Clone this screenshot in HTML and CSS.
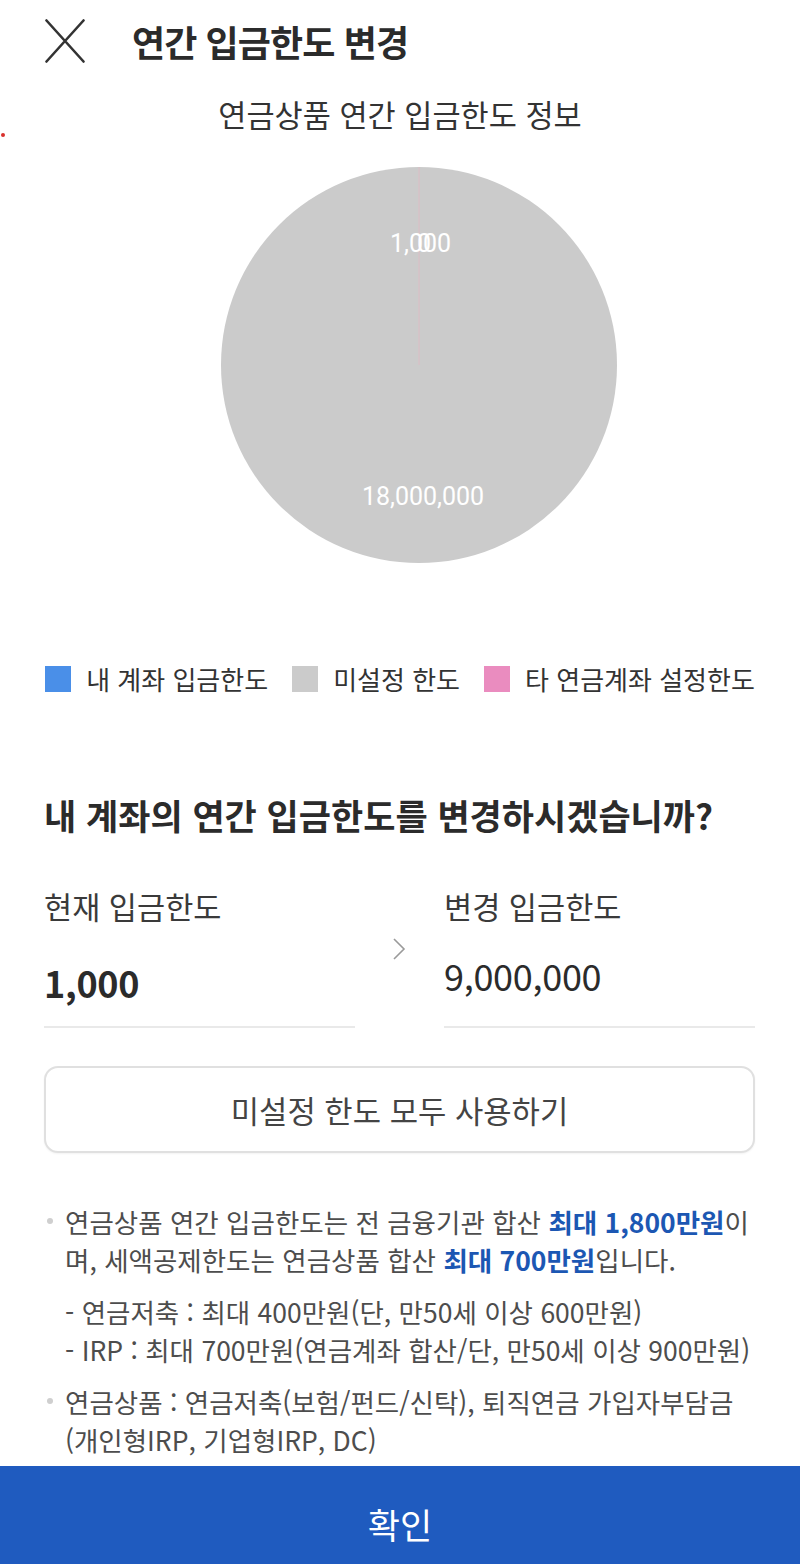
FILE: index.html
```html
<!DOCTYPE html>
<html lang="ko">
<head>
<meta charset="utf-8">
<title>연간 입금한도 변경</title>
<link rel="stylesheet" href="styles.css">
</head>
<body>
<div class="page">
  <span class="red-dot"></span>
  <header class="header">
    <span class="close">
      <svg width="40" height="44" viewBox="0 0 40 44"><path d="M1.5 1.5 L38.5 42.5 M38.5 1.5 L1.5 42.5" stroke="#333" stroke-width="2.6" fill="none" stroke-linecap="round"/></svg>
    </span>
    <h1 class="title">연간 입금한도 변경</h1>
  </header>

  <h2 class="chart-title">연금상품 연간 입금한도 정보</h2>

  <div class="pie-wrap">
    <svg class="pie" width="396" height="396" viewBox="0 0 396 396">
      <circle cx="198" cy="198" r="198" fill="#cbcbcb"/>
      <line x1="198" y1="198" x2="198" y2="0" stroke="#dcbcc4" stroke-width="1"/>
      <text class="pie-label" x="169" y="85">1,000</text>
      <text class="pie-label" x="196" y="85">0</text>
      <text class="pie-label" x="202" y="338" text-anchor="middle">18,000,000</text>
    </svg>
  </div>

  <ul class="legend">
    <li><span class="swatch sw-blue"></span>내 계좌 입금한도</li>
    <li><span class="swatch sw-gray"></span>미설정 한도</li>
    <li><span class="swatch sw-pink"></span>타 연금계좌 설정한도</li>
  </ul>

  <h3 class="question">내 계좌의 연간 입금한도를 변경하시겠습니까?</h3>

  <div class="fields">
    <div class="field">
      <div class="field-label">현재 입금한도</div>
      <div class="field-value current">1,000</div>
    </div>
    <div class="arrow">
      <svg width="14" height="24" viewBox="0 0 14 24"><path d="M2 2 L12 12 L2 22" stroke="#9a9a9a" stroke-width="1.6" fill="none"/></svg>
    </div>
    <div class="field">
      <div class="field-label">변경 입금한도</div>
      <div class="field-value next">9,000,000</div>
    </div>
  </div>

  <button class="use-all" type="button">미설정 한도 모두 사용하기</button>

  <div class="notes">
    <div class="note bullet">연금상품 연간 입금한도는 전 금융기관 합산 <b>최대 1,800만원</b>이<br>며, 세액공제한도는 연금상품 합산 <b>최대 700만원</b>입니다.</div>
    <div class="note sub">- 연금저축 : 최대 400만원(단, 만50세 이상 600만원)<br>- IRP : 최대 700만원(연금계좌 합산/단, 만50세 이상 900만원)</div>
    <div class="note bullet">연금상품 : 연금저축(보험/펀드/신탁), 퇴직연금 가입자부담금<br>(개인형IRP, 기업형IRP, DC)</div>
  </div>

  <button class="confirm" type="button">확인</button>
</div>
</body>
</html>
```
FILE: styles.css
```css
* { box-sizing: border-box; }
html, body { margin: 0; padding: 0; background: #fff; }
body {
  font-family: "Noto Sans CJK KR", "Noto Sans", sans-serif;
  color: #333;
}
.page {
  position: relative;
  width: 800px;
  height: 1564px;
  display: flex;
  flex-direction: column;
  overflow: hidden;
}
.red-dot {
  position: absolute;
  left: 1px;
  top: 133px;
  width: 4px;
  height: 4px;
  border-radius: 50%;
  background: #d9302c;
}
.header {
  height: 82px;
  display: flex;
  align-items: center;
  padding-left: 45px;
}
.close { display: flex; width: 40px; height: 44px; }
.title {
  margin: 0 0 0 47px;
  font-size: 36px;
  font-weight: 700;
  color: #2b2b2b;
  line-height: 44px;
  letter-spacing: -0.9px;
}
.chart-title {
  margin: 12px 0 0;
  text-align: center;
  font-size: 30.6px;
  font-weight: 400;
  line-height: 40px;
  color: #333;
}
.pie-wrap {
  margin-top: 33px;
  display: flex;
  justify-content: center;
  padding-left: 38px;
}
.pie { display: block; }
.pie-label {
  font-family: Roboto, "Noto Sans", sans-serif;
  font-size: 25px;
  fill: #ffffff;
}
.legend {
  list-style: none;
  margin: 101px 0 0;
  padding: 0;
  display: flex;
  justify-content: center;
  gap: 24px;
}
.legend li {
  display: flex;
  align-items: center;
  gap: 15px;
  font-size: 26px;
  line-height: 30px;
  color: #333;
}
.swatch { width: 26px; height: 26px; display: inline-block; }
.sw-blue { background: #4a8fe8; }
.sw-gray { background: #cbcbcb; }
.sw-pink { background: #ea8cbf; }
.question {
  margin: 99px 0 0;
  padding-left: 44px;
  font-size: 35px;
  font-weight: 700;
  line-height: 44px;
  color: #2b2b2b;
}
.fields {
  margin-top: 49px;
  display: grid;
  grid-template-columns: 311px 89px 311px;
  padding-left: 44px;
}
.field {
  height: 142px;
  border-bottom: 2px solid #e9e9e9;
}
.field-label {
  font-size: 30.6px;
  line-height: 40px;
  color: #3a3a3a;
}
.field-value {
  font-size: 36px;
  line-height: 48px;
  color: #2b2b2b;
  letter-spacing: -0.3px;
}
.field-value.current { margin-top: 32px; font-weight: 700; }
.field-value.next { margin-top: 25px; font-weight: 400; }
.arrow {
  display: flex;
  justify-content: center;
  padding-top: 51px;
  padding-right: 2px;
}
.arrow svg { display: block; }
.use-all {
  margin: 38px 45px 0 44px;
  height: 87px;
  border: 2px solid #e0e0e0;
  border-radius: 14px;
  background: #fff;
  box-shadow: 0 1px 2px rgba(0,0,0,0.05);
  font-family: inherit;
  font-size: 30.8px;
  color: #444;
  cursor: pointer;
}
.notes {
  margin-top: 50px;
  display: flex;
  flex-direction: column;
  gap: 14px;
  padding-left: 65px;
}
.note {
  position: relative;
  font-size: 26.5px;
  line-height: 38px;
  color: #4d4d4d;
  white-space: nowrap;
}
.note b { color: #1c57b3; font-weight: 700; }
.note.bullet::before {
  content: "";
  position: absolute;
  left: -18px;
  top: 15px;
  width: 6px;
  height: 6px;
  border-radius: 50%;
  background: #cfcfcf;
}
.confirm {
  margin-top: auto;
  height: 98px;
  border: 0;
  background: #1f5bbf;
  color: #fff;
  font-family: inherit;
  font-size: 35px;
  width: 100%;
  padding-top: 18px;
}
```
